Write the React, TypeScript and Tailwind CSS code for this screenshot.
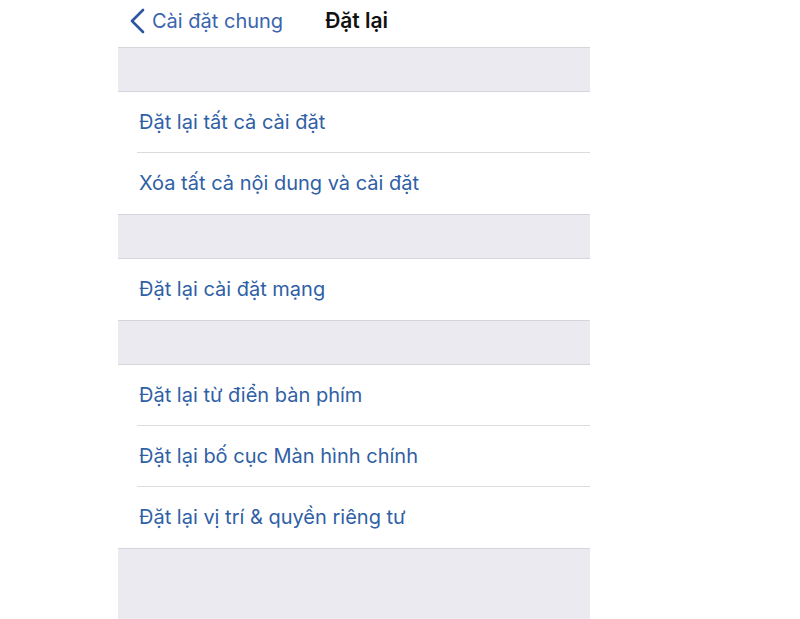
import React from "react";

const groups: string[][] = [
  ["Đặt lại tất cả cài đặt", "Xóa tất cả nội dung và cài đặt"],
  ["Đặt lại cài đặt mạng"],
  ["Đặt lại từ điển bàn phím", "Đặt lại bố cục Màn hình chính", "Đặt lại vị trí & quyền riêng tư"],
];

function Gap({ grow = false }: { grow?: boolean }) {
  return (
    <div
      className={
        "bg-[#ebeaf0] border-y border-[#d6d5dc] " + (grow ? "flex-1 border-b-0" : "h-[45px]")
      }
    />
  );
}

function Row({ label, last }: { label: string; last: boolean }) {
  return (
    <div className="relative h-[61px] flex items-center pl-[21px] pb-[2px] bg-white">
      <span className="text-[20px] text-[#2f5fa5]">{label}</span>
      {!last && <div className="absolute bottom-0 left-[19px] right-0 h-px bg-[#dcdce0]" />}
    </div>
  );
}

export default function App() {
  return (
    <div
      className="w-[800px] h-[619px] bg-white flex pl-[118px] overflow-hidden"
      style={{ fontFamily: "Inter, 'Noto Sans', sans-serif" }}
    >
      <div className="w-[472px] flex flex-col">
        <header className="h-[47px] flex items-center bg-white">
          <svg width="17" height="26" viewBox="0 0 17 26" className="ml-[11px] mt-[-6px]">
            <path d="M14 2 L3 13 L14 24" fill="none" stroke="#2c57a0" strokeWidth="2.7" strokeLinecap="round" strokeLinejoin="round" />
          </svg>
          <span className="ml-[6px] mt-[-6px] text-[20px] text-[#3a64ad]">Cài đặt chung</span>
          <span className="ml-[42px] mt-[-6px] text-[21px] font-semibold text-[#111]">Đặt lại</span>
        </header>
        {groups.map((g, gi) => (
          <React.Fragment key={gi}>
            <Gap />
            {g.map((label, i) => (
              <Row key={label} label={label} last={i === g.length - 1} />
            ))}
          </React.Fragment>
        ))}
        <Gap grow />
      </div>
    </div>
  );
}
